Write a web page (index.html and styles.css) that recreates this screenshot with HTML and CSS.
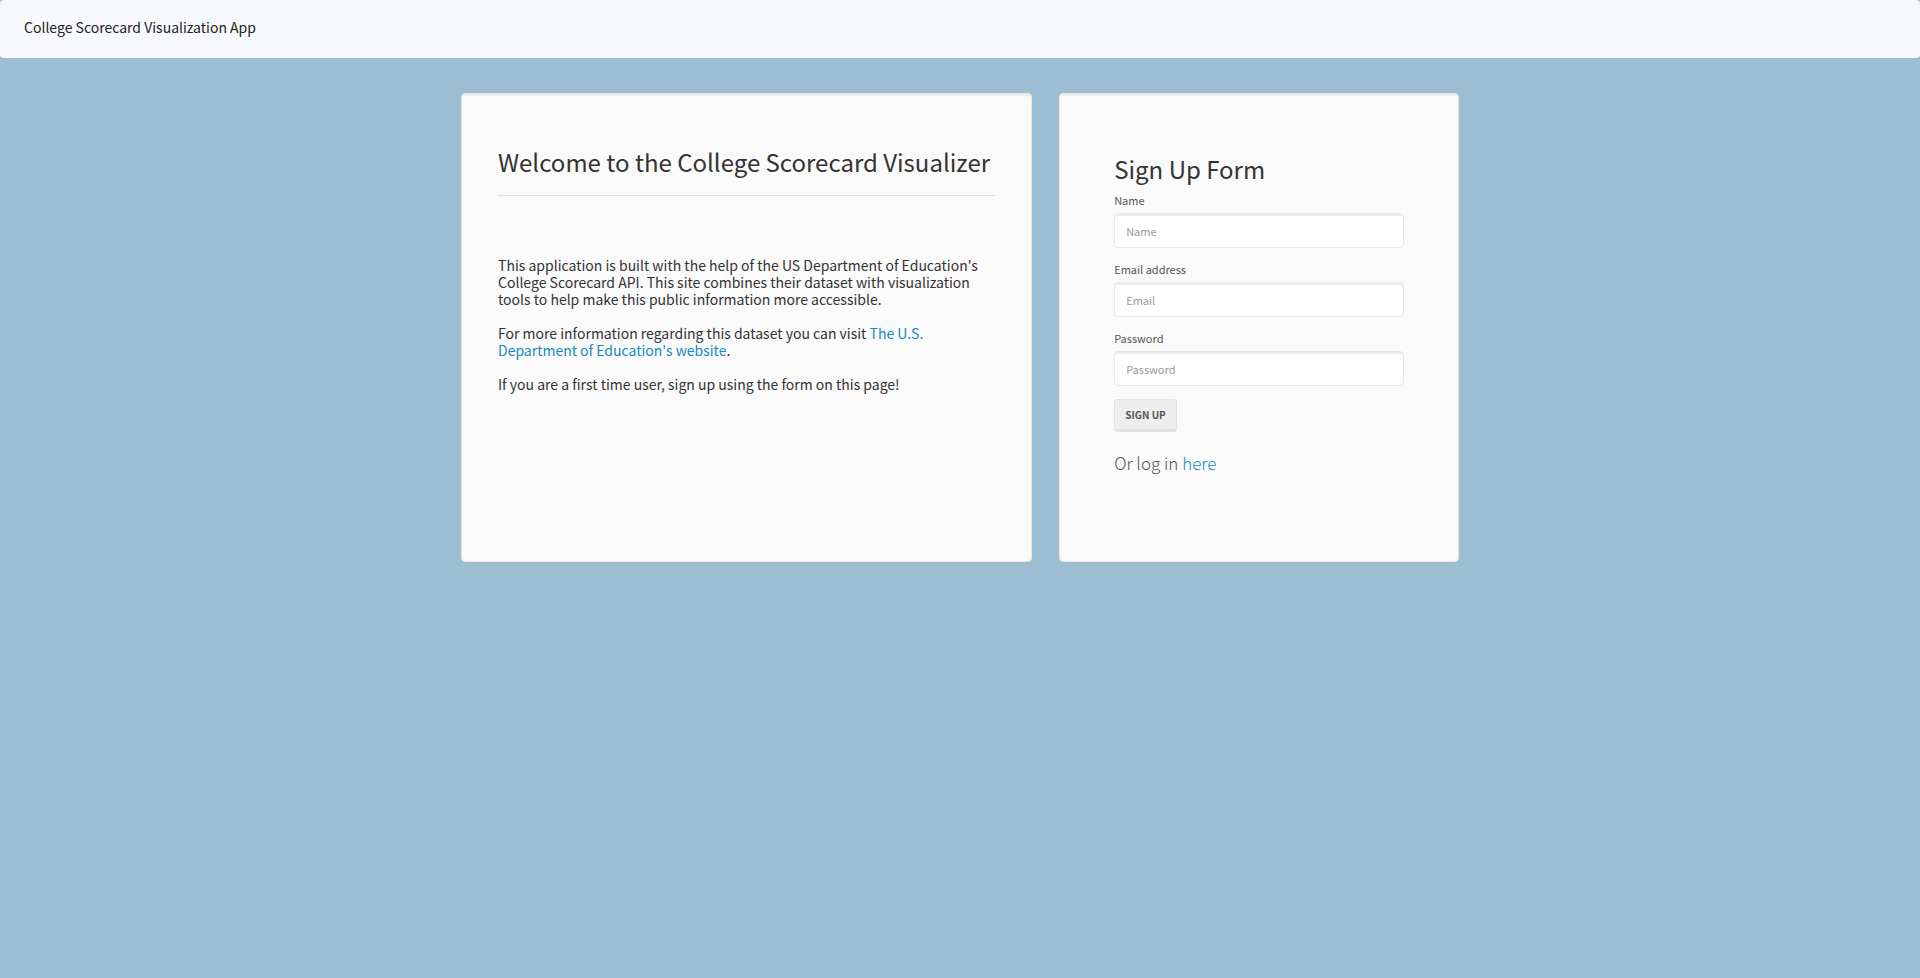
FILE: index.html
```html
<!DOCTYPE html>
<html lang="en">
<head>
<meta charset="utf-8">
<meta name="viewport" content="width=device-width, initial-scale=1">
<title>College Scorecard Visualization App</title>
<link rel="stylesheet" href="styles.css">
</head>
<body>
<header class="navbar"><a class="brand" href="#">College Scorecard Visualization App</a></header>
<main class="container">
  <section class="well intro">
    <h1 class="title intro-title">Welcome to the College Scorecard Visualizer</h1>
    <p>This application is built with the help of the US Department of Education's College Scorecard API. This site combines their dataset with visualization tools to help make this public information more accessible.</p>
    <p>For more information regarding this dataset you can visit <a href="#">The U.S. Department of Education's website</a>.</p>
    <p>If you are a first time user, sign up using the form on this page!</p>
  </section>
  <section class="well signup">
    <h2 class="title signup-title">Sign Up Form</h2>
    <form>
      <div class="field">
        <label for="name">Name</label>
        <input id="name" type="text" placeholder="Name">
      </div>
      <div class="field">
        <label for="email">Email address</label>
        <input id="email" type="email" placeholder="Email">
      </div>
      <div class="field">
        <label for="password">Password</label>
        <input id="password" type="password" placeholder="Password">
      </div>
      <button class="btn" type="submit">Sign up</button>
    </form>
    <p class="login">Or log in <a href="#">here</a></p>
  </section>
</main>
</body>
</html>
```
FILE: styles.css
```css
* { box-sizing: border-box; }

body {
  margin: 0;
  background: #9cbdd2;
  color: #333;
  font-family: "Source Sans Pro", "Noto Sans CJK SC", sans-serif;
  font-size: 14px;
  line-height: 17px;
}

a { color: #158cba; text-decoration: none; }

.navbar {
  padding: 19px 24px 22px;
  background: #f8f9fc;
  border-radius: 4px;
}

.brand { color: #222; }

.container {
  display: grid;
  grid-template-columns: minmax(0, 10fr) minmax(0, 7fr);
  gap: 27px;
  max-width: 998px;
  margin: 35px auto;
}

.well {
  min-height: 469px;
  background: #fafafa;
  border: 1px solid #e7e7e7;
  border-radius: 4px;
  box-shadow: inset 0 2px 1px rgba(0, 0, 0, 0.05);
}

.intro { padding: 52px 36px; }
.signup { padding: 59px 54px; }

.title {
  margin: 0;
  font-size: 24px;
  font-weight: 400;
  line-height: 32px;
}

.intro-title {
  margin-bottom: 61px;
  padding-bottom: 17px;
  border-bottom: 1px solid #ddd;
}

.signup-title { margin-bottom: 7px; }

.intro p { margin: 0 0 17px; }

.field { margin-bottom: 13px; }

label {
  display: block;
  margin-bottom: 4px;
  color: #555;
  font-size: 11px;
  line-height: 17px;
}

input {
  display: block;
  width: 100%;
  height: 35px;
  padding: 0 11px;
  background: #fff;
  border: 1px solid #e7e7e7;
  border-radius: 4px;
  box-shadow: inset 0 2px 0 rgba(0, 0, 0, 0.075);
  color: #555;
  font: inherit;
  font-size: 11px;
}

input::placeholder { color: #999; }

.btn {
  height: 33px;
  padding: 0 10px;
  background: #eee;
  border: 1px solid #e2e2e2;
  border-bottom-width: 3px;
  border-radius: 3px;
  color: #555;
  font: inherit;
  font-size: 10px;
  font-weight: 700;
  text-transform: uppercase;
}

.login {
  margin: 19px 0 0;
  color: #555;
  font-size: 17px;
  font-weight: 200;
  line-height: 24px;
}

@media (max-width: 800px) {
  .container { grid-template-columns: minmax(0, 1fr); padding: 0 16px; }
}
```
